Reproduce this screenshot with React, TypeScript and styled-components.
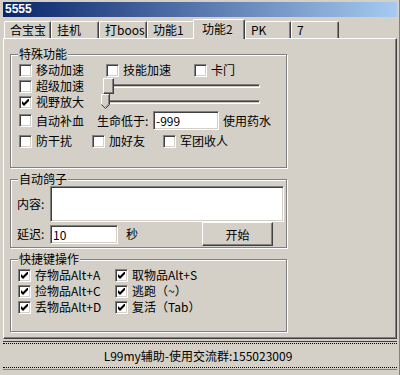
import React from "react";
import styled, { createGlobalStyle } from "styled-components";

const GlobalStyle = createGlobalStyle`
  html, body {
    margin: 0;
    padding: 0;
    background: #d4d0c8;
  }
  body {
    font-family: "Noto Sans CJK SC", "Noto Sans", sans-serif;
    font-size: 12px;
    color: #000;
  }
`;

const Window = styled.div`
  box-sizing: border-box;
  width: 400px;
  height: 375px;
  padding: 2px 3px 0 3px;
  background: #d4d0c8;
  box-shadow: inset -1px 0 #808080;
  display: flex;
  flex-direction: column;
  overflow: hidden;
`;

const TitleBar = styled.div`
  height: 15px;
  padding-left: 2px;
  background: linear-gradient(to right, #0a246a, #a6caf0);
  color: #fff;
  font-family: "Liberation Sans", Arial, sans-serif;
  font-weight: bold;
  font-size: 12px;
  line-height: 15px;
`;

const TabRow = styled.div`
  height: 21px;
  padding-left: 1px;
  display: flex;
  align-items: flex-end;
`;

const Tab = styled.div<{ $active?: boolean; $w: number }>`
  box-sizing: border-box;
  flex: none;
  width: ${(p) => p.$w}px;
  height: ${(p) => (p.$active ? 20 : 17)}px;
  margin-left: ${(p) => (p.$active ? -2 : 0)}px;
  margin-bottom: ${(p) => (p.$active ? -1 : 0)}px;
  padding: ${(p) => (p.$active ? "1px 0 0 8px" : "0 0 0 5px")};
  position: relative;
  z-index: ${(p) => (p.$active ? 2 : 1)};
  background: #d4d0c8;
  border-top: 1px solid #fff;
  border-left: 1px solid #fff;
  border-right: 1px solid #404040;
  border-radius: 2px 2px 0 0;
  box-shadow: inset -1px 0 #808080;
  line-height: 16px;
  white-space: nowrap;
`;

const Panel = styled.div`
  box-sizing: border-box;
  width: 394px;
  height: 301px;
  padding: 9px 0 0 6px;
  border-top: 1px solid #fff;
  border-left: 1px solid #fff;
  border-right: 1px solid #404040;
  border-bottom: 1px solid #404040;
  box-shadow: inset -1px -1px #808080;
`;

const Group = styled.fieldset<{ $pt: number; $pb: number; $pl: number; $gap?: number }>`
  box-sizing: border-box;
  width: 277px;
  margin: ${(p) => p.$gap ?? 0}px 0 0 0;
  padding: ${(p) => `${p.$pt}px 3px ${p.$pb}px ${p.$pl}px`};
  border: 1px solid #808080;
  box-shadow: 1px 1px 0 #fff, inset 1px 1px 0 #fff;
  min-width: 0;
`;

const Legend = styled.legend<{ $ml: number }>`
  margin-left: ${(p) => p.$ml}px;
  padding: 0 1px;
  background: #d4d0c8;
  line-height: 12px;
  height: 12px;
  position: relative;
  z-index: 1;
`;

const Row = styled.div<{ $h: number; $mt?: number }>`
  height: ${(p) => p.$h}px;
  margin-top: ${(p) => p.$mt ?? 0}px;
  display: flex;
  align-items: center;
  white-space: nowrap;
`;

const CheckLabel = styled.label<{ $w?: number }>`
  flex: none;
  width: ${(p) => (p.$w ? `${p.$w}px` : "auto")};
  display: flex;
  align-items: center;
  gap: 4px;
  line-height: 16px;
`;

const Box = styled.span`
  box-sizing: border-box;
  flex: none;
  width: 13px;
  height: 13px;
  background: #fff;
  border: 1px solid;
  border-color: #808080 #fff #fff #808080;
  box-shadow: inset 1px 1px #404040, inset -1px -1px #d4d0c8;
  display: flex;
  align-items: center;
  justify-content: center;
`;

const Text = styled.span<{ $ml?: number; $w?: number }>`
  flex: none;
  margin-left: ${(p) => p.$ml ?? 0}px;
  width: ${(p) => (p.$w ? `${p.$w}px` : "auto")};
  line-height: 16px;
`;

const Check: React.FC<{ label: string; checked?: boolean; w?: number }> = ({
  label,
  checked,
  w,
}) => (
  <CheckLabel $w={w}>
    <Box>
      {checked && (
        <svg width="7" height="7" viewBox="0 0 7 7">
          <path d="M0 2 L2 4 L7 -1 V2 L2 7 L0 5 Z" fill="#000" />
        </svg>
      )}
    </Box>
    <span>{label}</span>
  </CheckLabel>
);

const SliderWrap = styled.div<{ $w: number }>`
  position: relative;
  flex: none;
  width: ${(p) => p.$w}px;
  height: 16px;
  display: flex;
  align-items: center;
`;

const Groove = styled.div`
  box-sizing: border-box;
  width: 100%;
  height: 4px;
  background: #d4d0c8;
  border-top: 1px solid #808080;
  border-left: 1px solid #808080;
  border-bottom: 1px solid #fff;
  border-right: 1px solid #fff;
  box-shadow: inset 0 1px #404040;
`;

const Thumb = styled.div`
  position: absolute;
  left: 0;
  top: 0;
  box-sizing: border-box;
  width: 11px;
  height: 16px;
  background: #d4d0c8;
  border-top: 1px solid #fff;
  border-left: 1px solid #fff;
  border-right: 1px solid #404040;
  border-bottom: 1px solid #404040;
  box-shadow: inset -1px -1px #808080;
`;

const PointThumb = styled.svg`
  position: absolute;
  left: 0;
  top: 0;
`;

const Field = styled.input<{ $w: number; $h?: number }>`
  box-sizing: border-box;
  flex: none;
  width: ${(p) => p.$w}px;
  height: ${(p) => p.$h ?? 19}px;
  margin: 0;
  padding: 0 2px;
  font: inherit;
  font-size: 12px;
  color: #000;
  background: #fff;
  border: 1px solid;
  border-color: #808080 #fff #fff #808080;
  box-shadow: inset 1px 1px #404040, inset -1px -1px #d4d0c8;
  outline: none;
`;

const Area = styled.textarea`
  box-sizing: border-box;
  flex: none;
  width: 234px;
  height: 36px;
  margin: 0;
  padding: 2px;
  font: inherit;
  resize: none;
  background: #fff;
  border: 1px solid;
  border-color: #808080 #fff #fff #808080;
  box-shadow: inset 1px 1px #404040, inset -1px -1px #d4d0c8;
  outline: none;
`;

const Button = styled.button`
  box-sizing: border-box;
  flex: none;
  width: 71px;
  height: 24px;
  margin: 0 0 0 64px;
  padding: 0;
  font: inherit;
  color: #000;
  background: #d4d0c8;
  border: 1px solid;
  border-color: #fff #404040 #404040 #fff;
  box-shadow: inset -1px -1px #808080;
`;

const KeyGrid = styled.div`
  display: grid;
  grid-template-columns: 97px auto;
  grid-auto-rows: 16px;
  align-items: center;
`;

const StatusBar = styled.div`
  margin-top: 2px;
  width: 394px;
  border-top: 1px solid #404040;
  border-bottom: 1px solid #808080;
  padding: 1px 0;
`;

const StatusInner = styled.div`
  height: 23px;
  border-top: 1px dotted #000;
  border-bottom: 1px dotted #000;
  display: flex;
  align-items: center;
  justify-content: center;
  padding-right: 4px;
`;

const tabs = ["合宝宝", "挂机", "打boos", "功能1", "功能2", "PK", "7"];
const tabWidths = [47, 48, 48, 48, 52, 46, 48];

const keys = [
  "存物品Alt+A",
  "取物品Alt+S",
  "捡物品Alt+C",
  "逃跑（~）",
  "丢物品Alt+D",
  "复活（Tab）",
];

export default function App() {
  return (
    <>
      <GlobalStyle />
      <Window>
        <TitleBar>5555</TitleBar>
        <TabRow>
          {tabs.map((t, i) => (
            <Tab key={t} $w={tabWidths[i]} $active={t === "功能2"}>
              {t}
            </Tab>
          ))}
        </TabRow>
        <Panel>
          <Group $pt={2} $pb={18} $pl={8}>
            <Legend $ml={-1}>特殊功能</Legend>
            <Row $h={16}>
              <Check label="移动加速" w={87} />
              <Check label="技能加速" w={88} />
              <Check label="卡门" />
            </Row>
            <Row $h={16}>
              <Check label="超级加速" w={84} />
              <SliderWrap $w={157}>
                <Groove />
                <Thumb />
              </SliderWrap>
            </Row>
            <Row $h={16}>
              <Check label="视野放大" checked w={82} />
              <SliderWrap $w={159}>
                <Groove />
                <PointThumb width="9" height="15" viewBox="0 0 9 15">
                  <path d="M0 0 H8 V10 L4 14 L0 10 Z" fill="#d4d0c8" />
                  <path d="M0.5 10.5 V0.5 H7.5" stroke="#fff" fill="none" />
                  <path d="M8.5 0 V10.5 L4.5 14.5 L0.5 10.5" stroke="#404040" fill="none" />
                  <path d="M7.5 1 V10 L4.5 13" stroke="#808080" fill="none" />
                </PointThumb>
              </SliderWrap>
            </Row>
            <Row $h={21}>
              <Check label="自动补血" w={78} />
              <Text $w={56}>生命低于:</Text>
              <Field $w={66} value="-999" readOnly />
              <Text $ml={4}>使用药水</Text>
            </Row>
            <Row $h={16} $mt={2}>
              <Check label="防干扰" w={73} />
              <Check label="加好友" w={71} />
              <Check label="军团收人" />
            </Row>
          </Group>

          <Group $pt={1} $pb={1} $pl={6} $gap={5}>
            <Legend $ml={1}>自动鸽子</Legend>
            <Row $h={36}>
              <Text $w={33}>内容:</Text>
              <Area readOnly value="" />
            </Row>
            <Row $h={24}>
              <Text $w={33}>延迟:</Text>
              <Field $w={68} value="10" readOnly />
              <Text $ml={8}>秒</Text>
              <Button>开始</Button>
            </Row>
          </Group>

          <Group $pt={2} $pb={16} $pl={7} $gap={5}>
            <Legend $ml={0}>快捷键操作</Legend>
            <KeyGrid>
              {keys.map((k) => (
                <Check key={k} label={k} checked />
              ))}
            </KeyGrid>
          </Group>
        </Panel>
        <StatusBar>
          <StatusInner>L99my辅助-使用交流群:155023009</StatusInner>
        </StatusBar>
      </Window>
    </>
  );
}
